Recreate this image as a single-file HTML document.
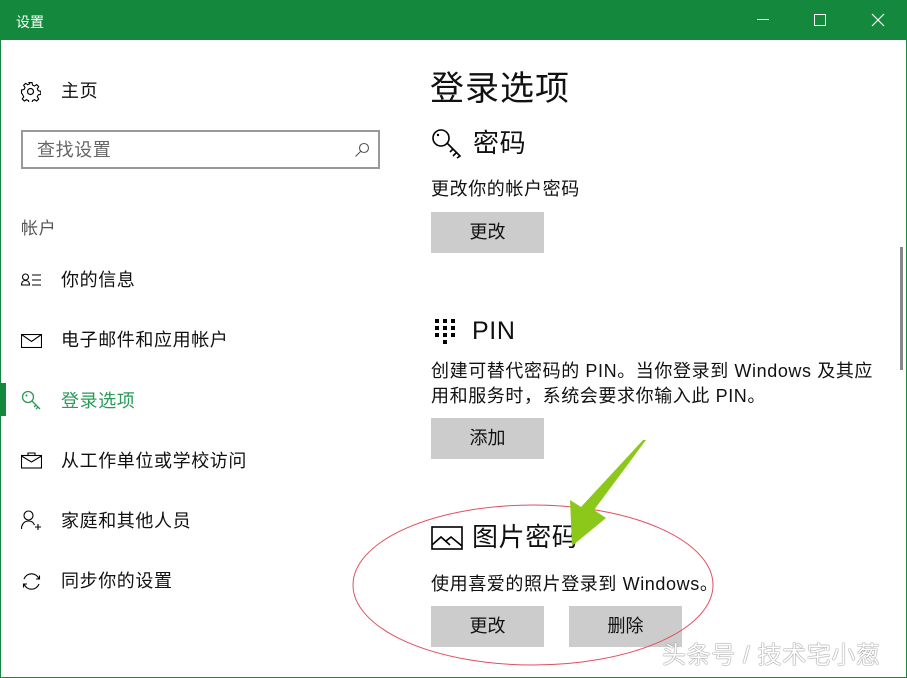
<!DOCTYPE html>
<html><head><meta charset="utf-8"><style>
*{margin:0;padding:0;box-sizing:border-box}
body{width:907px;height:678px;overflow:hidden;background:#fff;font-family:"Liberation Sans","Noto Sans CJK SC",sans-serif;color:#000;position:relative}
.frame{position:absolute;left:0;top:0;width:907px;height:678px;border:1px solid #16873f;border-top:none}
.title{position:absolute;left:0;top:0;width:907px;height:40px;background:#14893d;color:#fff;font-size:14px}
.t{position:absolute;font-size:18px;white-space:nowrap;line-height:1;letter-spacing:0.6px;color:#111}
.btn{position:absolute;background:#cccccc;width:113px;height:41px;font-size:18px;text-align:center;line-height:41px;color:#111}
svg{position:absolute}
</style></head><body>
<div class="frame"></div>
<div class="title">
<div style="position:absolute;left:16px;top:12px">设置</div>
<div style="position:absolute;left:757px;top:19px;width:12px;height:1px;background:#fff"></div>
<div style="position:absolute;left:814px;top:14px;width:12px;height:12px;border:1px solid #fff"></div>
<svg style="left:871px;top:13px" width="14" height="14"><path d="M1 1L13 13M13 1L1 13" stroke="#fff" stroke-width="1.2"/></svg>
</div>
<svg style="left:20px;top:81px" width="21" height="21" viewBox="0 0 21 21"><circle cx="10.5" cy="10.5" r="3" fill="none" stroke="#000" stroke-width="1.2"/><path d="M9 1.5h3l.5 2.5 2 1 2.2-1.4 2 2-1.4 2.2 1 2 2.5.5v3l-2.5.5-1 2 1.4 2.2-2 2-2.2-1.4-2 1-.5 2.5H9l-.5-2.5-2-1-2.2 1.4-2-2 1.4-2.2-1-2L1.5 12V9l2.5-.5 1-2L3.6 4.3l2-2 2.2 1.4 2-1z" fill="none" stroke="#000" stroke-width="1.1"/></svg>
<div class="t" style="left:61px;top:82px">主页</div>
<div style="position:absolute;left:21px;top:130px;width:359px;height:39px;border:2px solid #999"></div>
<div class="t" style="left:37px;top:141px;color:#666">查找设置</div>
<svg style="left:354px;top:142px" width="16" height="16"><circle cx="10" cy="6" r="4.5" fill="none" stroke="#555" stroke-width="1.1"/><path d="M7 9L1.5 14.5" stroke="#555" stroke-width="1.1"/></svg>
<div class="t" style="left:21px;top:220px;font-size:17px;color:#555">帐户</div>
<svg style="left:21px;top:273px" width="21" height="14"><circle cx="4.5" cy="4" r="3" fill="none" stroke="#000" stroke-width="1.1"/><path d="M.5 12c0-3 1.8-4.5 4-4.5s4 1.5 4 4.5zM11 2h9M11 7h9M11 12h9" fill="none" stroke="#000" stroke-width="1.1"/></svg>
<div class="t" style="left:61px;top:271px">你的信息</div>
<svg style="left:21px;top:334px" width="21" height="14"><rect x=".5" y=".5" width="20" height="13" fill="none" stroke="#000" stroke-width="1.1"/><path d="M.5 .5l10 7 10-7" fill="none" stroke="#000" stroke-width="1.1"/></svg>
<div class="t" style="left:61px;top:331px">电子邮件和应用帐户</div>
<div style="position:absolute;left:0;top:383px;width:6px;height:33px;background:#14893d"></div>
<svg style="left:21px;top:390px" width="21" height="21"><circle cx="7" cy="7" r="5.5" fill="none" stroke="#2a9a57" stroke-width="1.3"/><circle cx="5.5" cy="5.5" r="1" fill="#2a9a57"/><path d="M11 11l8 8M15 15l-2 2M17 17l-2 2" fill="none" stroke="#2a9a57" stroke-width="1.3"/></svg>
<div class="t" style="left:61px;top:392px;color:#2a9a57">登录选项</div>
<svg style="left:21px;top:452px" width="21" height="17"><rect x=".5" y="3.5" width="20" height="12.5" fill="none" stroke="#000" stroke-width="1.1"/><path d="M7 3.5V1h7v2.5M.5 4l10 6 10-6" fill="none" stroke="#000" stroke-width="1.1"/></svg>
<div class="t" style="left:61px;top:452px">从工作单位或学校访问</div>
<svg style="left:21px;top:510px" width="22" height="22"><circle cx="7.5" cy="5.5" r="4.5" fill="none" stroke="#000" stroke-width="1.1"/><path d="M.5 19c0-5 3-8 7-8s5 2 6 4M17 14v6M14 17h6" fill="none" stroke="#000" stroke-width="1.1"/></svg>
<div class="t" style="left:61px;top:512px">家庭和其他人员</div>
<svg style="left:21px;top:571px" width="21" height="21"><path d="M3 8a8 8 0 0 1 15 0M18 13a8 8 0 0 1-15 0M15 8h3.5V4.5M6 13H2.5v3.5" fill="none" stroke="#000" stroke-width="1.1"/></svg>
<div class="t" style="left:61px;top:572px">同步你的设置</div>
<div class="t" style="left:430px;top:72px;font-size:34px;letter-spacing:1px">登录选项</div>
<svg style="left:432px;top:129px" width="32" height="30"><circle cx="9" cy="9" r="8" fill="none" stroke="#000" stroke-width="1.6"/><circle cx="6" cy="6" r="1.2" fill="#000"/><path d="M15 14l13 13-3 2M21 20l-3 3M24 24l-3 3" fill="none" stroke="#000" stroke-width="1.6"/></svg>
<div class="t" style="left:473px;top:130px;font-size:26px">密码</div>
<div class="t" style="left:431px;top:180px">更改你的帐户密码</div>
<div class="btn" style="left:431px;top:212px">更改</div>
<svg style="left:435px;top:319px" width="24" height="26"><g fill="#000"><rect x="0" y="0" width="4" height="4"/><rect x="8" y="0" width="4" height="4"/><rect x="16" y="0" width="4" height="4"/><rect x="0" y="7" width="4" height="4"/><rect x="8" y="7" width="4" height="4"/><rect x="16" y="7" width="4" height="4"/><rect x="0" y="14" width="4" height="4"/><rect x="8" y="14" width="4" height="4"/><rect x="16" y="14" width="4" height="4"/><rect x="8" y="21" width="4" height="4"/></g></svg>
<div class="t" style="left:472px;top:319px;font-size:25px">PIN</div>
<div class="t" style="left:431px;top:362px">创建可替代密码的 PIN。当你登录到 Windows 及其应</div>
<div class="t" style="left:431px;top:387px">用和服务时，系统会要求你输入此 PIN。</div>
<div class="btn" style="left:431px;top:418px">添加</div>
<svg style="left:431px;top:526px" width="32" height="24"><rect x="1" y="1" width="30" height="22" fill="none" stroke="#000" stroke-width="1.6"/><path d="M1 19l9-8 9 8M15 15l5-4 11 9" fill="none" stroke="#000" stroke-width="1.6"/></svg>
<div class="t" style="left:472px;top:524px;font-size:26px">图片密码</div>
<div class="t" style="left:431px;top:575px">使用喜爱的照片登录到 Windows。</div>
<div class="btn" style="left:431px;top:606px">更改</div>
<div class="btn" style="left:569px;top:606px">删除</div>
<div style="position:absolute;left:900px;top:247px;width:3px;height:123px;background:#888"></div>
<svg style="left:0;top:0" width="907" height="678"><ellipse cx="533" cy="585" rx="180" ry="80" fill="none" stroke="#e05060" stroke-width="1"/><path d="M646 440L594 510 606 518 572 546 570 500 581 507 643 440z" fill="#8cc81a"/></svg>
<div class="t" style="left:662px;top:644px;font-size:24px;color:#fff;text-shadow:0 0 1px #666,0 0 1px #666">头条号 / 技术宅小葱</div>
</body></html>
